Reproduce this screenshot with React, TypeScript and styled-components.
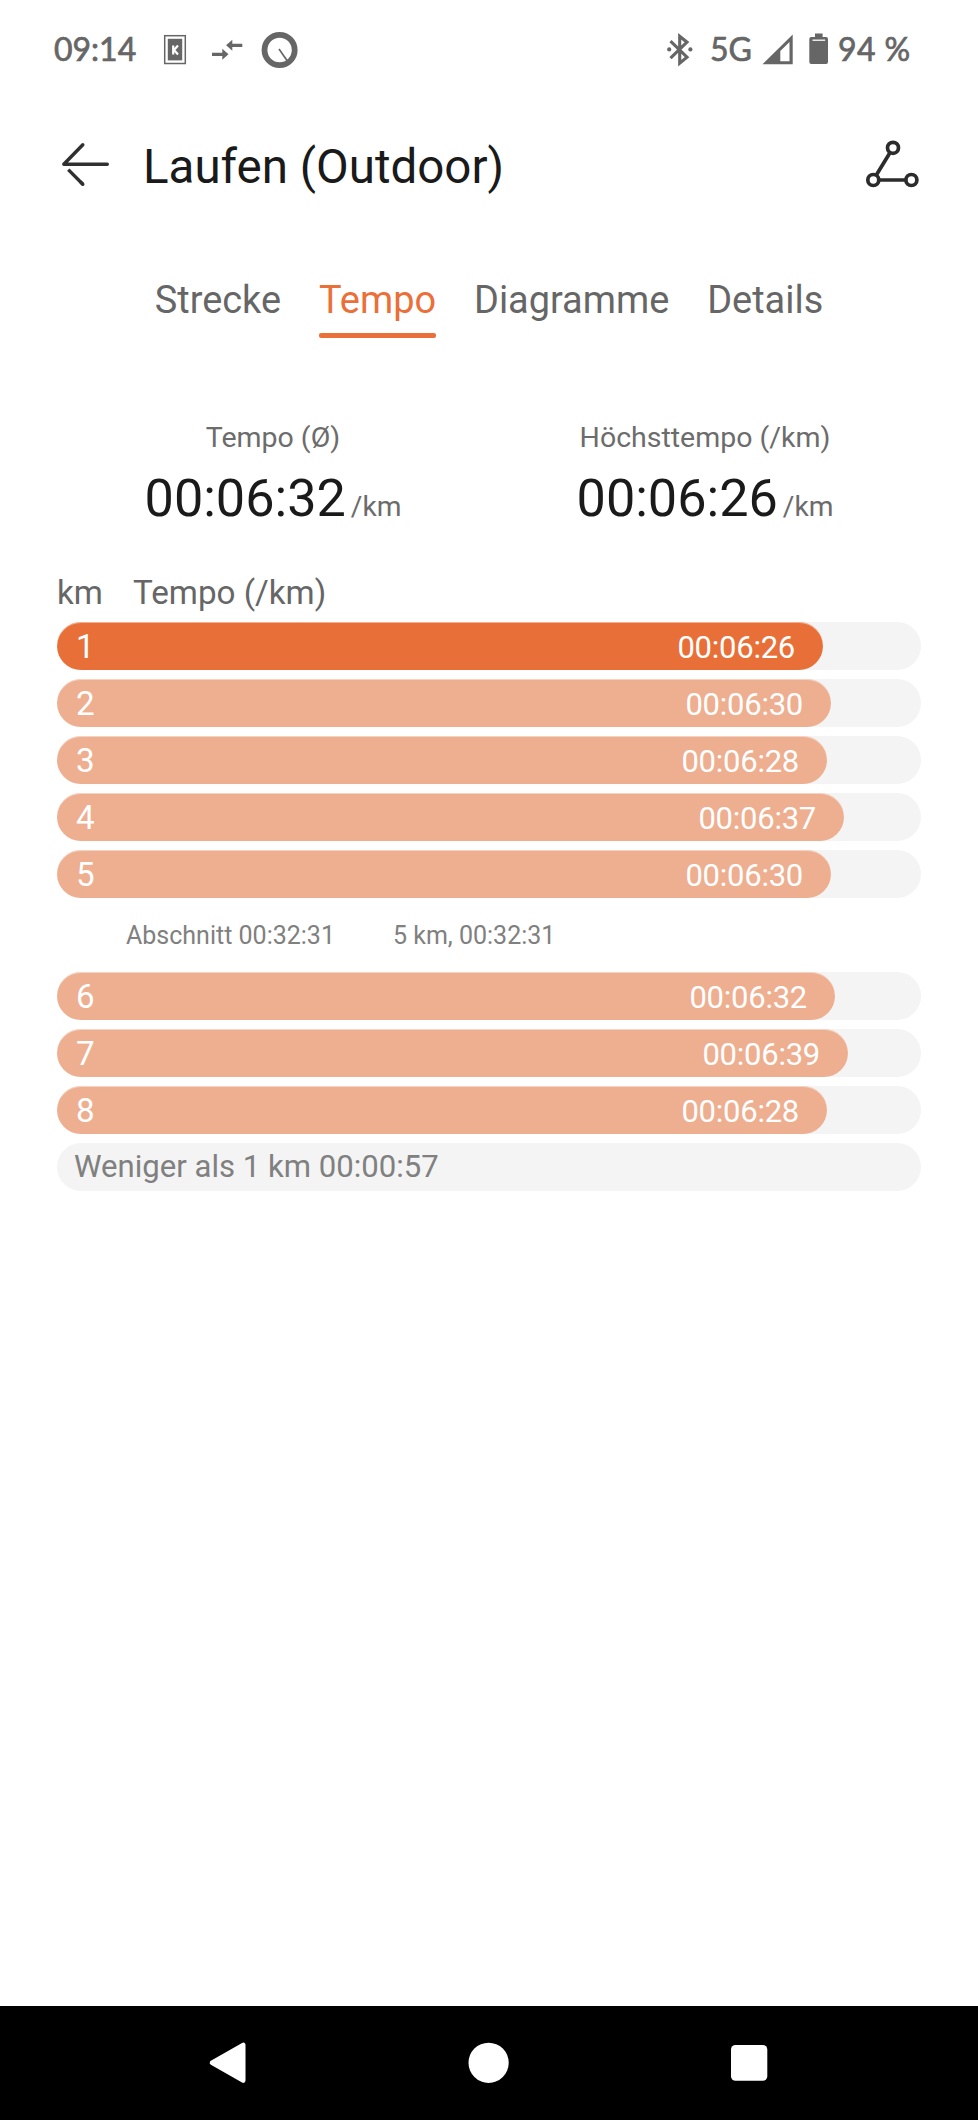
import React from "react";
import styled, { createGlobalStyle } from "styled-components";

const GlobalStyle = createGlobalStyle`
  * { box-sizing: border-box; }
  body { margin: 0; background: #fff; }
`;

const Screen = styled.div`
  display: flex;
  flex-direction: column;
  width: 978px;
  height: 2120px;
  background: #fff;
  font-family: Roboto, "Liberation Sans", sans-serif;
  color: #1a1a1a;
`;

const StatusBar = styled.div`
  display: flex;
  justify-content: space-between;
  height: 100px;
  padding: 0 66px 0 54px;
  font-family: Lato, Roboto, sans-serif;
  font-size: 32px;
  line-height: 98px;
  color: #666;
  -webkit-text-stroke: 0.7px #666;
`;

const StatusGroup = styled.div`
  display: flex;
`;

const StatusText = styled.span<{ $width: number; $spacing?: number }>`
  width: ${(p) => p.$width}px;
  letter-spacing: ${(p) => p.$spacing ?? 0}px;
  white-space: nowrap;
`;

const Icon = styled.svg`
  display: block;
  flex: none;
`;

const Header = styled.header`
  display: flex;
  align-items: center;
  height: 132px;
  padding-right: 52px;
`;

const Title = styled.h1`
  flex: 1;
  margin: 0;
  padding-top: 2px;
  font-size: 47.5px;
  font-weight: 400;
  line-height: 56px;
`;

const Tabs = styled.nav`
  display: flex;
  justify-content: center;
  gap: 38px;
  height: 106px;
  padding-top: 45px;
`;

const Tab = styled.div<{ $active?: boolean }>`
  height: 61px;
  font-size: 37.9px;
  line-height: 46px;
  color: ${(p) => (p.$active ? "#eb6f38" : "#666")};
`;

const TabUnderline = styled.div`
  height: 5px;
  margin-top: 10px;
  border-radius: 2px;
  background: #eb6f38;
`;

const Summary = styled.section`
  display: grid;
  grid-template-columns: 1fr 1fr;
  height: 228px;
  padding: 80px 57px 0;
`;

const Stat = styled.div`
  display: flex;
  flex-direction: column;
  align-items: center;
`;

const StatLabel = styled.div`
  font-size: 28.5px;
  line-height: 36px;
  height: 44px;
  padding-top: 2px;
  color: #6c6c6c;
`;

const StatValue = styled.div`
  font-size: 52.2px;
  line-height: 62px;
  padding-top: 6px;
  white-space: nowrap;
`;

const StatUnit = styled.span`
  margin-left: 5px;
  font-size: 28.2px;
  color: #6c6c6c;
`;

const Columns = styled.div`
  display: flex;
  height: 56px;
  padding: 7px 57px 0;
  font-size: 33.2px;
  line-height: 40px;
  color: #666;
`;

const KmColumn = styled.span`
  width: 76px;
`;

const Laps = styled.section`
  display: flex;
  flex-direction: column;
  gap: 9px;
  padding: 0 57px;
`;

const Track = styled.div`
  height: 48px;
  border-radius: 24px;
  background: #f4f4f4;
`;

const Fill = styled.div<{ $best?: boolean }>`
  display: flex;
  justify-content: space-between;
  height: 48px;
  padding: 0 28px 0 19px;
  border-radius: 24px;
  background: ${(p) => (p.$best ? "#e87038" : "#eeae90")};
  box-shadow: inset 0 1px rgba(255, 255, 255, 0.45);
  color: #fff;
`;

const LapNumber = styled.span`
  font-size: 33.2px;
  line-height: 49px;
`;

const LapTime = styled.span`
  font-size: 31px;
  letter-spacing: -0.25px;
  line-height: 51px;
`;

const Section = styled.div`
  display: flex;
  height: 56px;
  padding-left: 69px;
  font-size: 25px;
  line-height: 58px;
  color: #808080;
`;

const SectionTime = styled.span`
  width: 267px;
`;

const Remainder = styled(Track)`
  padding-left: 17px;
  font-size: 31.1px;
  line-height: 47px;
  color: #808080;
`;

const NavBar = styled.footer`
  display: grid;
  grid-template-columns: repeat(3, 260px);
  justify-content: center;
  justify-items: center;
  height: 114px;
  margin-top: auto;
  background: #000;
`;

type Lap = { km: number; time: string; width: number; best?: boolean };

const firstLaps: Lap[] = [
  { km: 1, time: "00:06:26", width: 766, best: true },
  { km: 2, time: "00:06:30", width: 774 },
  { km: 3, time: "00:06:28", width: 770 },
  { km: 4, time: "00:06:37", width: 787 },
  { km: 5, time: "00:06:30", width: 774 },
];

const lastLaps: Lap[] = [
  { km: 6, time: "00:06:32", width: 778 },
  { km: 7, time: "00:06:39", width: 791 },
  { km: 8, time: "00:06:28", width: 770 },
];

const LapRow = ({ lap }: { lap: Lap }) => (
  <Track>
    <Fill $best={lap.best} style={{ width: lap.width }}>
      <LapNumber>{lap.km}</LapNumber>
      <LapTime>{lap.time}</LapTime>
    </Fill>
  </Track>
);

const NotificationIcons = () => (
  <Icon width="140" height="100" viewBox="160 0 140 100">
    <rect x="164.7" y="35.7" width="20.6" height="27.8" fill="none" stroke="#666" strokeWidth="1.5" />
    <rect x="167.8" y="38.8" width="14.4" height="21.6" fill="#666" />
    <path d="M173.2 45.5v9M178 45.5l-4 4.6 4 4.4" fill="none" stroke="#fff" strokeWidth="2.2" />
    <path d="M212 54.3h11M242.3 45.3h-11" stroke="#666" strokeWidth="3.2" />
    <path d="M222.3 48.7v11l6.2-5.5zM232.3 39.8v11l-6.2-5.5z" fill="#666" />
    <circle cx="279.6" cy="50" r="15.1" fill="none" stroke="#666" strokeWidth="5.8" />
    <path d="M279 49l8 11.5" stroke="#666" strokeWidth="1.7" />
  </Icon>
);

const BluetoothIcon = () => (
  <Icon width="46" height="100" viewBox="664 0 46 100">
    <path d="M670.5 58.2L687 42.2l-7.3-6v27l7.3-6-16.5-16" fill="none" stroke="#666" strokeWidth="3.1" />
    <circle cx="669.2" cy="49.4" r="2.1" fill="#666" />
    <circle cx="690.4" cy="49.4" r="2.1" fill="#666" />
  </Icon>
);

const SignalBatteryIcons = () => (
  <Icon width="80" height="100" viewBox="758 0 80 100">
    <path
      d="M762.5 64.2h30.2V34.4zM780.3 51v10.2h9.2V42z"
      fill="#666"
      fillRule="evenodd"
    />
    <path
      d="M815 33.6h7.6V37h3.4a2 2 0 0 1 2 2v23a2 2 0 0 1-2 2h-14.7a2 2 0 0 1-2-2V39a2 2 0 0 1 2-2h3.7z"
      fill="#666"
    />
    <path d="M812.5 40.2h12.6" stroke="#fff" strokeWidth="1.3" />
  </Icon>
);

const BackIcon = () => (
  <Icon width="143" height="132" viewBox="0 100 143 132">
    <g fill="none" stroke="#303030" strokeWidth="3.4">
      <path d="M107.3 164.3H63.8L82.8 144.7" strokeLinecap="round" strokeLinejoin="round" />
      <path d="M82.8 184.2L68.3 169.6" />
      <path d="M82.8 184.2L81 182.4" strokeLinecap="round" />
    </g>
  </Icon>
);

const RouteIcon = () => (
  <Icon width="66" height="132" viewBox="860 100 66 132">
    <g fill="none" stroke="#2c2c2c" strokeWidth="3.7">
      <circle cx="893" cy="147.8" r="5.5" />
      <circle cx="873.3" cy="180" r="5.5" />
      <circle cx="911.4" cy="180" r="5.5" />
      <path d="M890.1 152.5L876.2 175.3M878.8 180h27.1" />
    </g>
  </Icon>
);

const App = () => (
  <>
    <GlobalStyle />
    <Screen>
      <StatusBar>
        <StatusGroup>
          <StatusText $width={106}>09:14</StatusText>
          <NotificationIcons />
        </StatusGroup>
        <StatusGroup>
          <BluetoothIcon />
          <StatusText $width={48}>5G</StatusText>
          <SignalBatteryIcons />
          <StatusText $width={74} $spacing={0.4}>94 %</StatusText>
        </StatusGroup>
      </StatusBar>
      <Header>
        <BackIcon />
        <Title>Laufen (Outdoor)</Title>
        <RouteIcon />
      </Header>
      <Tabs>
        <Tab>Strecke</Tab>
        <Tab $active>
          Tempo
          <TabUnderline />
        </Tab>
        <Tab>Diagramme</Tab>
        <Tab>Details</Tab>
      </Tabs>
      <Summary>
        <Stat>
          <StatLabel>Tempo (Ø)</StatLabel>
          <StatValue>
            00:06:32<StatUnit>/km</StatUnit>
          </StatValue>
        </Stat>
        <Stat>
          <StatLabel>Höchsttempo (/km)</StatLabel>
          <StatValue>
            00:06:26<StatUnit>/km</StatUnit>
          </StatValue>
        </Stat>
      </Summary>
      <Columns>
        <KmColumn>km</KmColumn>
        <span>Tempo (/km)</span>
      </Columns>
      <Laps>
        {firstLaps.map((lap) => (
          <LapRow key={lap.km} lap={lap} />
        ))}
        <Section>
          <SectionTime>Abschnitt 00:32:31</SectionTime>
          <span>5 km, 00:32:31</span>
        </Section>
        {lastLaps.map((lap) => (
          <LapRow key={lap.km} lap={lap} />
        ))}
        <Remainder>Weniger als 1 km 00:00:57</Remainder>
      </Laps>
      <NavBar>
        <Icon width="114" height="114" viewBox="172 2006 114 114">
          <path
            d="M212 2062.8L243.2 2045V2080.6Z"
            fill="#fff"
            stroke="#fff"
            strokeWidth="4.6"
            strokeLinejoin="round"
          />
        </Icon>
        <Icon width="114" height="114" viewBox="432 2006 114 114">
          <circle cx="488.6" cy="2062.8" r="20.1" fill="#fff" />
        </Icon>
        <Icon width="114" height="114" viewBox="692 2006 114 114">
          <rect x="731" y="2045" width="36.3" height="35.8" rx="4.5" fill="#fff" />
        </Icon>
      </NavBar>
    </Screen>
  </>
);

export default App;
